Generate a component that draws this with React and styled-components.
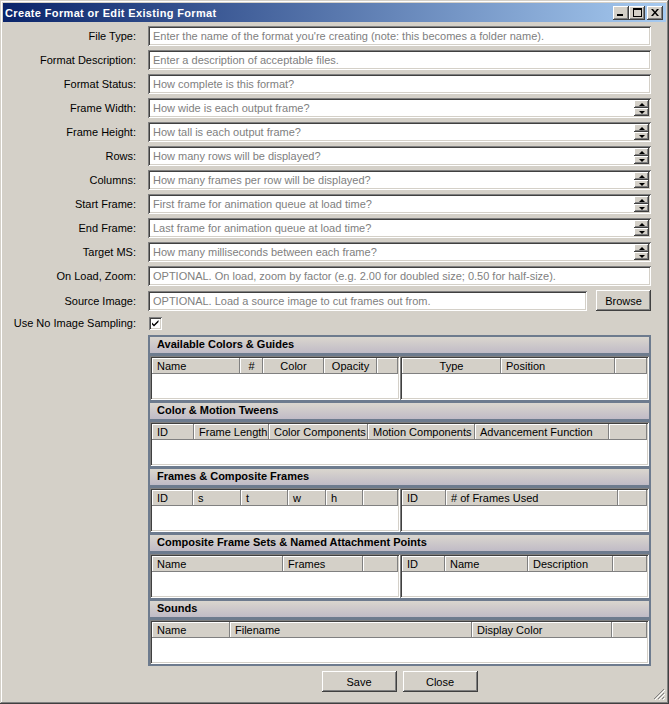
import React from 'react';
import styled, { createGlobalStyle } from 'styled-components';

const GlobalStyle = createGlobalStyle`
  html, body { margin: 0; padding: 0; background: #d4d0c8; }
  body { font-family: "Liberation Sans", Arial, sans-serif; font-size: 11px; color: #000; }
  * { box-sizing: border-box; }
`;

const raised = `inset -1px -1px #404040, inset 1px 1px #ffffff, inset -2px -2px #808080, inset 2px 2px #d4d0c8`;
const sunken = `inset 1px 1px #808080, inset -1px -1px #ffffff, inset 2px 2px #404040, inset -2px -2px #d4d0c8`;

const Window = styled.div`
  position: relative;
  width: 669px;
  height: 704px;
  background: #d4d0c8;
  padding: 3px;
  box-shadow: inset -1px -1px #404040, inset 1px 1px #d4d0c8, inset -2px -2px #808080, inset 2px 2px #ffffff;
  display: flex;
  flex-direction: column;
`;

const TitleBar = styled.div`
  height: 19px;
  background: linear-gradient(to right, #0a246a, #a6caf0);
  display: flex;
  align-items: center;
  padding: 0 3px 0 2px;
`;

const TitleText = styled.div`
  flex: 1;
  color: #fff;
  font-weight: bold;
  font-size: 11px;
  letter-spacing: 0.35px;
  white-space: nowrap;
`;

const CaptionButtons = styled.div`
  display: flex;
  align-items: center;
`;

const CaptionButton = styled.div`
  width: 16px;
  height: 14px;
  background: #d4d0c8;
  box-shadow: ${raised};
  display: flex;
  align-items: center;
  justify-content: center;
  margin-left: ${p => (p.$gap ? '2px' : '0')};
`;

const Form = styled.div`
  display: grid;
  grid-template-columns: 145px 503px;
  row-gap: 4px;
  margin-top: 4px;
  align-items: center;
`;

const Label = styled.div`
  text-align: right;
  padding-right: 12px;
  white-space: nowrap;
`;

const TextBox = styled.div`
  height: 20px;
  background: #fff;
  box-shadow: ${sunken};
  display: flex;
  padding: 2px;
  flex: 1;
`;

const Input = styled.input`
  flex: 1;
  min-width: 0;
  border: 0;
  outline: 0;
  background: transparent;
  font: inherit;
  padding: 0 3px;
  color: #000;
  &::placeholder { color: #808080; opacity: 1; }
`;

const Spinner = styled.div`
  width: 15px;
  display: flex;
  flex-direction: column;
`;

const SpinButton = styled.div`
  height: 8px;
  background: #d4d0c8;
  box-shadow: inset -1px -1px #404040, inset 1px 1px #ffffff, inset -2px -2px #808080;
  display: flex;
  align-items: center;
  justify-content: center;
  &::after {
    content: '';
    width: 0;
    height: 0;
    border-left: 3.5px solid transparent;
    border-right: 3.5px solid transparent;
    ${p => (p.$down ? 'border-top: 3px solid #000;' : 'border-bottom: 3px solid #000;')}
  }
`;

const FieldRow = styled.div`
  display: flex;
  gap: 9px;
  align-items: center;
  height: ${p => (p.$h ? `${p.$h}px` : 'auto')};
`;

const PushButton = styled.button`
  width: ${p => p.$w || 75}px;
  height: 21px;
  border: 0;
  background: #d4d0c8;
  box-shadow: ${raised};
  font: inherit;
  color: #000;
  padding: 0;
`;

const CheckBox = styled.div`
  width: 13px;
  height: 13px;
  margin-left: 1px;
  background: #fff;
  box-shadow: ${sunken};
  display: flex;
  align-items: center;
  justify-content: center;
`;

const Panel = styled.div`
  grid-column: 2;
  background: #6d7b8e;
  padding: 2px;
  display: flex;
  flex-direction: column;
  gap: 3px;
`;

const Section = styled.div`
  display: flex;
  flex-direction: column;
  gap: 3px;
`;

const SectionHeader = styled.div`
  height: 16px;
  background: linear-gradient(#dad6ce, #c0bbc6);
  font-weight: bold;
  padding: 0 0 2px 7px;
  display: flex;
  align-items: center;
  white-space: nowrap;
`;

const TablesRow = styled.div`
  display: flex;
  height: 44px;
`;

const TablePane = styled.div`
  flex: ${p => (p.$w ? `0 0 ${p.$w}px` : '1')};
  background: #fff;
  box-shadow: ${sunken};
  padding: 2px;
  display: flex;
  flex-direction: column;
`;

const HeaderRow = styled.div`
  display: grid;
  grid-template-columns: ${p => p.$cols};
  height: 16px;
  background: #d4d0c8;
`;

const HeaderCell = styled.div`
  box-shadow: inset -1px -1px #808080, inset 1px 1px #ffffff;
  padding: 0 5px 1px;
  display: flex;
  align-items: center;
  justify-content: ${p => (p.$center ? 'center' : 'flex-start')};
  white-space: nowrap;
  overflow: hidden;
`;

const TableBody = styled.div`
  flex: 1;
  background: #fff;
`;

const ButtonRow = styled.div`
  grid-column: 2;
  display: flex;
  justify-content: center;
  gap: 6px;
  margin-top: 1px;
`;

const Grip = styled.div`
  position: absolute;
  right: 4px;
  bottom: 4px;
  width: 12px;
  height: 12px;
  display: flex;
`;

const Table = ({ w, cols, heads }) => (
  <TablePane $w={w}>
    <HeaderRow $cols={cols}>
      {heads.map((h, i) => {
        const [text, center] = Array.isArray(h) ? h : [h, false];
        return (
          <HeaderCell key={i} $center={center}>
            {text}
          </HeaderCell>
        );
      })}
    </HeaderRow>
    <TableBody />
  </TablePane>
);

const fields = [
  ['File Type:', "Enter the name of the format you're creating (note: this becomes a folder name).", false],
  ['Format Description:', 'Enter a description of acceptable files.', false],
  ['Format Status:', 'How complete is this format?', false],
  ['Frame Width:', 'How wide is each output frame?', true],
  ['Frame Height:', 'How tall is each output frame?', true],
  ['Rows:', 'How many rows will be displayed?', true],
  ['Columns:', 'How many frames per row will be displayed?', true],
  ['Start Frame:', 'First frame for animation queue at load time?', true],
  ['End Frame:', 'Last frame for animation queue at load time?', true],
  ['Target MS:', 'How many milliseconds between each frame?', true],
  ['On Load, Zoom:', 'OPTIONAL. On load, zoom by factor (e.g. 2.00 for doubled size; 0.50 for half-size).', false],
];

export default function App() {
  return (
    <>
      <GlobalStyle />
      <Window>
        <TitleBar>
          <TitleText>Create Format or Edit Existing Format</TitleText>
          <CaptionButtons>
            <CaptionButton>
              <svg width="8" height="7" viewBox="0 0 8 7">
                <rect x="0" y="5" width="6" height="2" fill="#000" />
              </svg>
            </CaptionButton>
            <CaptionButton>
              <svg width="9" height="9" viewBox="0 0 9 9">
                <rect x="0.5" y="0.5" width="8" height="8" fill="none" stroke="#000" />
                <rect x="0" y="0" width="9" height="2" fill="#000" />
              </svg>
            </CaptionButton>
            <CaptionButton $gap>
              <svg width="8" height="7" viewBox="0 0 8 7">
                <path d="M0 0h2l2 2.5L6 0h2L5 3.5 8 7H6L4 4.5 2 7H0l3-3.5z" fill="#000" />
              </svg>
            </CaptionButton>
          </CaptionButtons>
        </TitleBar>

        <Form>
          {fields.map(([label, ph, spin]) => (
            <React.Fragment key={label}>
              <Label>{label}</Label>
              <TextBox>
                <Input placeholder={ph} />
                {spin && (
                  <Spinner>
                    <SpinButton />
                    <SpinButton $down />
                  </Spinner>
                )}
              </TextBox>
            </React.Fragment>
          ))}

          <Label>Source Image:</Label>
          <FieldRow>
            <TextBox>
              <Input placeholder="OPTIONAL. Load a source image to cut frames out from." />
            </TextBox>
            <PushButton $w={55}>Browse</PushButton>
          </FieldRow>

          <Label>Use No Image Sampling:</Label>
          <FieldRow $h={16}>
            <CheckBox>
              <svg width="9" height="9" viewBox="0 0 9 9">
                <path d="M1 3.5l2 2 4.5-4.5v2L3 7.5 1 5.5z" fill="#000" />
              </svg>
            </CheckBox>
          </FieldRow>

          <Panel>
            <Section>
              <SectionHeader>Available Colors &amp; Guides</SectionHeader>
              <TablesRow>
                <Table
                  w={250}
                  cols="88px 23px 61px 53px 1fr"
                  heads={['Name', ['#', true], ['Color', true], ['Opacity', true], '']}
                />
                <Table cols="99px 114px 1fr" heads={[['Type', true], 'Position', '']} />
              </TablesRow>
            </Section>

            <Section>
              <SectionHeader>Color &amp; Motion Tweens</SectionHeader>
              <TablesRow>
                <Table
                  cols="42px 75px 99px 107px 134px 1fr"
                  heads={['ID', 'Frame Length', 'Color Components', 'Motion Components', 'Advancement Function', '']}
                />
              </TablesRow>
            </Section>

            <Section>
              <SectionHeader>Frames &amp; Composite Frames</SectionHeader>
              <TablesRow>
                <Table w={250} cols="41px 48px 47px 38px 37px 1fr" heads={['ID', 's', 't', 'w', 'h', '']} />
                <Table cols="44px 172px 1fr" heads={['ID', '# of Frames Used', '']} />
              </TablesRow>
            </Section>

            <Section>
              <SectionHeader>Composite Frame Sets &amp; Named Attachment Points</SectionHeader>
              <TablesRow>
                <Table w={250} cols="131px 80px 1fr" heads={['Name', 'Frames', '']} />
                <Table cols="43px 83px 85px 1fr" heads={['ID', 'Name', 'Description', '']} />
              </TablesRow>
            </Section>

            <Section>
              <SectionHeader>Sounds</SectionHeader>
              <TablesRow>
                <Table cols="78px 242px 140px 1fr" heads={['Name', 'Filename', 'Display Color', '']} />
              </TablesRow>
            </Section>
          </Panel>

          <ButtonRow>
            <PushButton>Save</PushButton>
            <PushButton>Close</PushButton>
          </ButtonRow>
        </Form>

        <Grip>
          <svg width="12" height="12" viewBox="0 0 12 12">
            <path d="M11 1L1 11M11 5L5 11M11 9L9 11" stroke="#808080" strokeWidth="1" />
            <path d="M12 2L2 12M12 6L6 12M12 10L10 12" stroke="#ffffff" strokeWidth="1" />
          </svg>
        </Grip>
      </Window>
    </>
  );
}
